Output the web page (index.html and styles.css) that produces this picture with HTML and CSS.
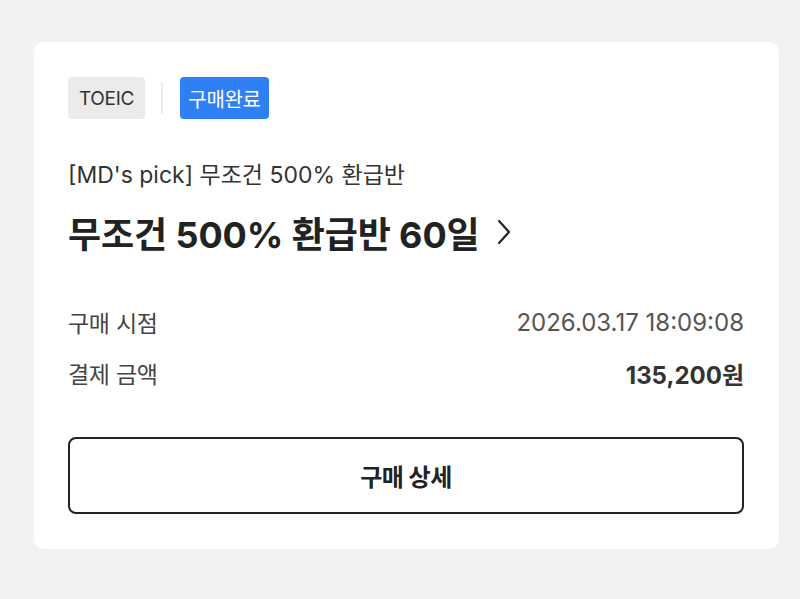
FILE: index.html
```html
<!DOCTYPE html>
<html lang="ko">
<head>
<meta charset="utf-8">
<link rel="stylesheet" href="styles.css">
</head>
<body>
<div class="card">
  <div class="tags">
    <span class="tag tag-gray">TOEIC</span>
    <span class="divider"></span>
    <span class="tag tag-blue">구매완료</span>
  </div>
  <div class="subtitle">[MD's pick] 무조건 500% 환급반</div>
  <div class="title">
    <span>무조건 500% 환급반 60일</span>
    <svg class="chev" width="16" height="26" viewBox="0 0 16 26"><path d="M3 2 L13 13 L3 24" fill="none" stroke="#222" stroke-width="2.2" stroke-linecap="round" stroke-linejoin="round"/></svg>
  </div>
  <div class="rows">
    <div class="row"><span class="label">구매 시점</span><span class="value">2026.03.17 18:09:08</span></div>
    <div class="row"><span class="label">결제 금액</span><span class="value strong">135,200원</span></div>
  </div>
  <button class="btn">구매 상세</button>
</div>
</body>
</html>
```
FILE: styles.css
```css
* { box-sizing: border-box; }
html, body { margin: 0; height: 100%; }
body {
  background: #f2f2f2;
  font-family: Inter, "Noto Sans CJK KR", sans-serif;
  padding: 42px 21px 0 34px;
  color: #222;
}
.card {
  background: #fff;
  border-radius: 10px;
  padding: 35px 35px 33px 34px;
  height: 507px;
}
.tags {
  display: flex;
  align-items: center;
  height: 42px;
}
.tag {
  display: inline-flex;
  align-items: center;
  justify-content: center;
  height: 42px;
  font-size: 19px;
  border-radius: 4px;
  letter-spacing: -0.3px;
}
.tag-gray { background: #ebebeb; color: #333; width: 77px; }
.tag-blue { background: #2f80f4; color: #fff; width: 89px; font-size: 20px; }
.divider {
  width: 2px;
  height: 32px;
  background: #ececec;
  margin: 0 17px 0 16px;
}
.subtitle {
  margin-top: 42px;
  font-size: 23px;
  line-height: 28px;
  color: #333;
  letter-spacing: 0;
}
.title {
  margin-top: 21px;
  display: flex;
  align-items: center;
  height: 44px;
  font-size: 36px;
  font-weight: 700;
  color: #222;
  letter-spacing: -0.1px;
}
.chev { margin-left: 16px; }
.rows {
  margin-top: 54px;
  display: flex;
  flex-direction: column;
  gap: 23px;
}
.row {
  display: flex;
  justify-content: space-between;
  align-items: center;
  height: 28px;
  font-size: 23px;
  color: #444;
  letter-spacing: -0.3px;
}
.value { color: #555; font-size: 24px; letter-spacing: 0; }
.value.strong { font-weight: 700; color: #333; letter-spacing: 0; }
.btn {
  display: block;
  width: 100%;
  margin-top: 50px;
  height: 77px;
  border: 2px solid #222;
  border-radius: 8px;
  background: #fff;
  font-family: Inter, "Noto Sans CJK KR", sans-serif;
  font-size: 24px;
  font-weight: 700;
  color: #222;
  letter-spacing: -0.5px;
}
```
